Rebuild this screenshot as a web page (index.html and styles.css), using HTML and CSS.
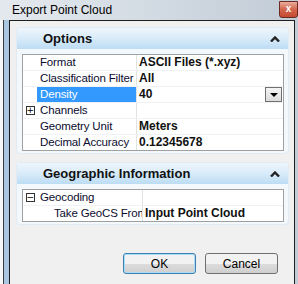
FILE: index.html
```html
<!DOCTYPE html>
<html lang="en">
<head>
    <meta charset="UTF-8">
    <title>Export Point Cloud</title>
    <link rel="stylesheet" href="styles.css">
</head>
<body>
    <div class="window">
        <div class="titlebar">
            <span class="title">Export Point Cloud</span>
            <span class="close">x</span>
        </div>
        <div class="frame">
            <div class="client">
                <div class="panel">
                    <div class="panel-head">
                        <span>Options</span>
                        <svg class="chevron" width="10" height="6" viewBox="0 0 10 6"><polyline points="1,5.5 5,1.5 9,5.5" fill="none" stroke="#222" stroke-width="2.4"/></svg>
                    </div>
                    <div class="grid">
                        <div class="row"><span class="gut"></span><span class="lbl">Format</span><span class="val">ASCII Files (*.xyz)</span></div>
                        <div class="row"><span class="gut"></span><span class="lbl">Classification Filter</span><span class="val">All</span></div>
                        <div class="row"><span class="gut"></span><span class="lbl sel">Density</span><span class="val">40<span class="drop"></span></span></div>
                        <div class="row"><span class="gut"><span class="box">+</span></span><span class="lbl">Channels</span><span class="val"></span></div>
                        <div class="row"><span class="gut"></span><span class="lbl">Geometry Unit</span><span class="val">Meters</span></div>
                        <div class="row"><span class="gut"></span><span class="lbl">Decimal Accuracy</span><span class="val">0.12345678</span></div>
                    </div>
                </div>
                <div class="panel">
                    <div class="panel-head">
                        <span>Geographic Information</span>
                        <svg class="chevron" width="10" height="6" viewBox="0 0 10 6"><polyline points="1,5.5 5,1.5 9,5.5" fill="none" stroke="#222" stroke-width="2.4"/></svg>
                    </div>
                    <div class="grid geo">
                        <div class="row"><span class="gut"><span class="box">&minus;</span></span><span class="lbl">Geocoding</span><span class="val"></span></div>
                        <div class="row"><span class="gut"></span><span class="lbl sub">Take GeoCS From</span><span class="val">Input Point Cloud</span></div>
                    </div>
                </div>
                <div class="buttons">
                    <button class="btn default">OK</button>
                    <button class="btn">Cancel</button>
                </div>
            </div>
        </div>
    </div>
</body>
</html>
```

FILE: styles.css
```css
body {
    margin: 0;
    font-family: "Liberation Sans", Arial, sans-serif;
    font-size: 12px;
    color: #111;
}
.window {
    width: 298px;
    height: 284px;
    overflow: hidden;
    display: flex;
    flex-direction: column;
    background: linear-gradient(to right, #e4e9ee, #cfd8e1 60%, #c2ccd6);
}
.titlebar {
    height: 20px;
    flex-shrink: 0;
    display: flex;
    align-items: flex-start;
    justify-content: space-between;
}
.title {
    margin: 3px 0 0 12px;
    font-size: 12px;
    color: #000;
}
.close {
    width: 17px;
    height: 15px;
    margin: 1px 0 0 0;
    border: 1px solid #6b2a22;
    border-radius: 0 0 3px 3px;
    background: linear-gradient(#e9ad9b, #d3654c 50%, #c44a2e);
    color: #fff;
    font-weight: bold;
    font-size: 10px;
    line-height: 14px;
    text-align: center;
}
.frame {
    flex: 1;
    display: flex;
    padding: 0 3px 0 9px;
    background: linear-gradient(to right, #f6f8fa 0 3px, #3a3a3a 3px 4px, #a9c6e2 4px 9px, transparent 9px);
}
.client {
    flex: 1;
    background: #f0f0f0;
    border: 1px solid #1e1e1e;
    border-bottom: none;
    padding: 6px 5px 0 6px;
}
.panel {
    background: #f3f8fc;
    border: 1px solid #e0ebf4;
    border-radius: 4px;
    padding: 0 4px 2px 5px;
    margin-bottom: 8px;
}
.panel-head {
    height: 21px;
    margin: 0 -4px 5px -5px;
    padding: 0 8px 0 26px;
    display: flex;
    align-items: center;
    justify-content: space-between;
    border-radius: 3px 3px 0 0;
    background: linear-gradient(#eef5fc, #d8ebf9 50%, #bcdcf4);
    font-size: 13px;
    font-weight: bold;
    color: #111;
}
.chevron {
    display: block;
}
.grid {
    border: 1px solid #a0a0a0;
    background: #fff;
}
.row {
    display: grid;
    grid-template-columns: 14px 100px 1fr;
    height: 16px;
    box-sizing: border-box;
    border-bottom: 1px solid #eef1f5;
    line-height: 15px;
}
.row:last-child {
    border-bottom: none;
    height: 15px;
}
.geo .row {
    grid-template-columns: 14px 106px 1fr;
}
.gut {
    display: flex;
    align-items: center;
    justify-content: center;
}
.box {
    width: 7px;
    height: 7px;
    border: 1px solid #333;
    font-size: 9px;
    line-height: 7px;
    text-align: center;
    color: #000;
    font-family: "DejaVu Sans", sans-serif;
}
.lbl {
    padding-left: 3px;
    border-right: 1px solid #e2e2e2;
    white-space: nowrap;
    overflow: hidden;
    font-size: 11.5px;
    letter-spacing: -0.15px;
    color: #0c0c30;
}
.lbl.sel {
    background: #3399ff;
    color: #fff;
}
.lbl.sub {
    padding-left: 17px;
}
.val {
    padding-left: 2px;
    font-weight: bold;
    white-space: nowrap;
    position: relative;
}
.drop {
    position: absolute;
    right: 1px;
    top: 0;
    width: 15px;
    height: 13px;
    border: 1px solid #707070;
    background: linear-gradient(#f4f4f4, #dcdcdc);
}
.drop::after {
    content: "";
    position: absolute;
    left: 4px;
    top: 5px;
    border-left: 4px solid transparent;
    border-right: 4px solid transparent;
    border-top: 4px solid #000;
}
.buttons {
    display: flex;
    justify-content: flex-end;
    gap: 9px;
    margin-top: 28px;
    padding-right: 11px;
}
.btn {
    width: 73px;
    height: 21px;
    border: 1px solid #707070;
    border-radius: 3px;
    background: linear-gradient(#f2f2f2 50%, #dddddd 50%, #cfcfcf);
    font-family: "Liberation Sans", Arial, sans-serif;
    font-size: 12px;
    color: #000;
    padding: 0;
}
.btn.default {
    border-color: #3c7fb1;
    box-shadow: inset 0 0 0 1px #a8dcf7;
}
```
